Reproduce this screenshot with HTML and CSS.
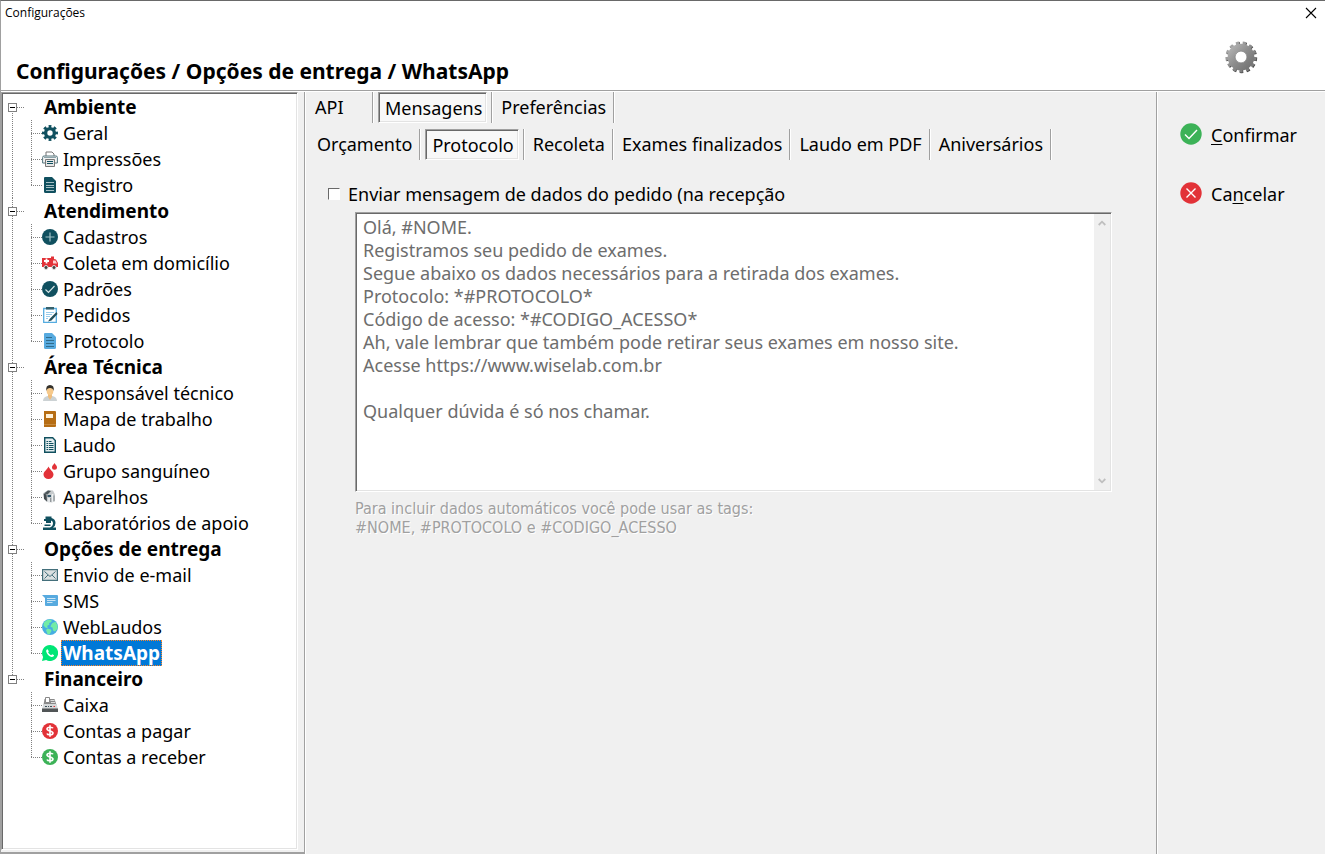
FILE: index.html
```html
<!DOCTYPE html>
<html lang="pt-BR">
<head>
    <meta charset="UTF-8">
    <title>Configurações</title>
    <link rel="stylesheet" href="styles.css">
</head>
<body>
    <div class="window">
        <header class="header">
            <div class="titlebar">
                <span>Configurações</span>
                <button class="close" aria-label="Fechar">
                    <svg width="12" height="12" viewBox="0 0 12 12"><path d="M1 1l10 10M11 1L1 11" stroke="#000" stroke-width="1.1"/></svg>
                </button>
            </div>
            <div class="heading">
                <h1>Configurações / Opções de entrega / WhatsApp</h1>
                <svg class="gear" width="34" height="34" viewBox="0 0 34 34">
                    <defs>
                        <linearGradient id="metal" x1="0" y1="0" x2="1" y2="1">
                            <stop offset="0" stop-color="#b0b0b0"/>
                            <stop offset="0.5" stop-color="#8c8c8c"/>
                            <stop offset="1" stop-color="#747474"/>
                        </linearGradient>
                    </defs>
                    <circle cx="17.6" cy="17.6" r="13.800" fill="none" stroke="#444" stroke-width="3.600" pathLength="130" stroke-dasharray="5 5"/>
                    <circle cx="17" cy="17" r="13.800" fill="none" stroke="url(#metal)" stroke-width="3.600" pathLength="130" stroke-dasharray="5 5"/>
                    <circle cx="17" cy="17" r="9.600" fill="none" stroke="url(#metal)" stroke-width="7.500"/>
                    <circle cx="17" cy="17" r="5.800" fill="#fff" stroke="#707070" stroke-width=".6"/>
                </svg>
            </div>
        </header>

        <div class="body">
            <aside class="sidebar">
                <ul class="tree sunken">
                    <li class="group">
                        <div class="group-row"><button class="toggle" aria-label="Recolher"></button><b>Ambiente</b></div>
                        <ul>
                            <li><a href="#">
                                <svg viewBox="0 0 16 16"><circle cx="8" cy="8" r="6.400" fill="none" stroke="#10505f" stroke-width="3.200" pathLength="80" stroke-dasharray="5.500 4.500" stroke-dashoffset="2.750"/><circle cx="8" cy="8" r="4.400" fill="none" stroke="#10505f" stroke-width="3.400"/></svg>
                                <span>Geral</span></a></li>
                            <li><a href="#">
                                <svg viewBox="0 0 16 16"><path d="M4 5V1h6l2 2v2" fill="#fff" stroke="#777" /><path d="M3 12H.6V6.5Q.6 5 2 5h12q1.400 0 1.400 1.500V12H13" fill="#f2f2f2" stroke="#56777f"/><path d="M2 6.500h12" stroke="#8ca4aa"/><path d="M3.500 8.500h9v7h-9z" fill="#e6e6e6" stroke="#777"/><path d="M5 10.500h6M5 12.500h6" stroke="#10505f"/></svg>
                                <span>Impressões</span></a></li>
                            <li><a href="#">
                                <svg viewBox="0 0 16 16"><path d="M3 0h7l4 4v10.500q0 1.500-1.500 1.500h-9Q2 16 2 14.500V1q0-1 1-1z" fill="#10505f"/><path d="M4 5.500h8M4 8.500h8M4 10.500h8M4 13.500h8" stroke="#b8cdd1" stroke-width=".9"/></svg>
                                <span>Registro</span></a></li>
                        </ul>
                    </li>
                    <li class="group">
                        <div class="group-row"><button class="toggle" aria-label="Recolher"></button><b>Atendimento</b></div>
                        <ul>
                            <li><a href="#">
                                <svg viewBox="0 0 16 16"><circle cx="8" cy="8" r="8" fill="#10505f"/><path d="M3.500 8h9M8 3.500v9" stroke="#9fc0c6" stroke-width="1.200"/></svg>
                                <span>Cadastros</span></a></li>
                            <li><a href="#">
                                <svg viewBox="0 0 16 16"><path d="M0 3h9V1.500h3V4l2 .5 2 3.500v4H0z" fill="#e23238"/><path d="M11 5.500h2.500L15 8.500h-4z" fill="#fbd0d0"/><path d="M2 6h5M4.500 3.500v5" stroke="#fff" stroke-width="1.800"/><circle cx="4" cy="12.500" r="2" fill="#444" stroke="#ddd"/><circle cx="12" cy="12.500" r="2" fill="#444" stroke="#ddd"/></svg>
                                <span>Coleta em domicílio</span></a></li>
                            <li><a href="#">
                                <svg viewBox="0 0 16 16"><circle cx="8" cy="8" r="8" fill="#10505f"/><path d="M3.500 8.500l3 3 6-6.500" fill="none" stroke="#d5e4e6" stroke-width="1.200"/></svg>
                                <span>Padrões</span></a></li>
                            <li><a href="#">
                                <svg viewBox="0 0 16 16"><path d="M1.700 1.500h12.600v13.800H1.700z" fill="#fff" stroke="#55ace0" stroke-width="1.300"/><path d="M4 0h8v2.500H4z" fill="#35616c"/><path d="M4 5.500h8M4 7.500h6M4 9.500h4M4 11.500h2" stroke="#8cc5e8" stroke-width=".9"/><path d="M14.500 5L8 11.500l-2 3 3.500-1L15.500 7z" fill="#244e59"/></svg>
                                <span>Pedidos</span></a></li>
                            <li><a href="#">
                                <svg viewBox="0 0 16 16"><path d="M3 0h7l4 4v10.500q0 1.500-1.500 1.500h-9Q2 16 2 14.500V1q0-1 1-1z" fill="#57aadf"/><path d="M4 4.500h6M4 7.500h8M4 10.500h8M4 13.500h8" stroke="#2b6582" stroke-width=".9"/></svg>
                                <span>Protocolo</span></a></li>
                        </ul>
                    </li>
                    <li class="group">
                        <div class="group-row"><button class="toggle" aria-label="Recolher"></button><b>Área Técnica</b></div>
                        <ul>
                            <li><a href="#">
                                <svg viewBox="0 0 16 16"><path d="M1 16q0-4 4.500-5h5q4.500 1 4.500 5z" fill="#ccd2d4"/><path d="M6 9h4v3l-2 3-2-3z" fill="#efbd7c"/><ellipse cx="8" cy="5.500" rx="3.400" ry="4.500" fill="#f6c98b"/><path d="M4.300 6Q3.500 0 8 0t3.700 6Q11 3 8 3T4.300 6z" fill="#33302b"/></svg>
                                <span>Responsável técnico</span></a></li>
                            <li><a href="#">
                                <svg viewBox="0 0 16 16"><path d="M2 0h11q1 0 1 1v14q0 1-1 1H2z" fill="#b66d14"/><path d="M4 3h7v4H4z" fill="#fff1d8"/><path d="M2 13.500h12" stroke="#ce9650" stroke-width=".7"/></svg>
                                <span>Mapa de trabalho</span></a></li>
                            <li><a href="#">
                                <svg viewBox="0 0 16 16"><path d="M2.700.8h8l2.600 2.700v11.700H2.700z" fill="#e4edef" stroke="#10505f" stroke-width="1.400"/><path d="M4.500 4.500h5M4.500 6.500h7M4.500 8.500h7M4.500 10.500h7M4.500 12.500h7" stroke="#10505f"/><path d="M6.500 4v9" stroke="#e4edef" stroke-width=".8"/></svg>
                                <span>Laudo</span></a></li>
                            <li><a href="#">
                                <svg viewBox="0 0 16 16"><path d="M6.500 3.500C5 7 1.500 8.500 1.500 11.500a5 4.500 0 0 0 10 0C11.500 8.500 8 7 6.500 3.500zM12.500 0C12 1.500 10 2.500 10 4.200a2.500 2.500 0 0 0 5 0C15 2.500 13 1.500 12.500 0z" fill="#e23238"/></svg>
                                <span>Grupo sanguíneo</span></a></li>
                            <li><a href="#">
                                <svg viewBox="0 0 16 16"><path d="M1.500 4l4.500-3 5 .5 2 4v6l-3 2-6-1z" fill="#c6cacc"/><path d="M1.500 4.500l3 1 .5 7-3-2.500z" fill="#41494d"/><path d="M2 4.500L6 1.500l3 .5-3.500 3.500z" fill="#4c565a"/><path d="M5.500 6h3.500v2H5.500z" fill="#34576a"/><path d="M7 9v5M10.500 5v8" stroke="#eef1f2" stroke-width="1.500"/><path d="M12 6.500v6M8.700 9v4" stroke="#858c8f"/></svg>
                                <span>Aparelhos</span></a></li>
                            <li><a href="#">
                                <svg viewBox="0 0 16 16"><path d="M3.500 1.500h6V3q4 1 4 5 0 3-2.500 4.500h3V15H1v-2.500h7Q11 11 11 8q0-2-2-2.500V8h-5V6H2V4h1.500z" fill="#10505f"/><path d="M2.500 9.500h6v1.500h-6z" fill="#10505f"/></svg>
                                <span>Laboratórios de apoio</span></a></li>
                        </ul>
                    </li>
                    <li class="group">
                        <div class="group-row"><button class="toggle" aria-label="Recolher"></button><b>Opções de entrega</b></div>
                        <ul>
                            <li><a href="#">
                                <svg viewBox="0 0 16 16"><path d="M.6 2.600h14.800v10.800H.6z" fill="#dbe0e1" stroke="#446f7b" stroke-width="1.200"/><path d="M2.500 4.500L8 9.500l5.500-5M2.500 11.500L6 8M13.500 11.500L10 8" fill="none" stroke="#446f7b"/></svg>
                                <span>Envio de e-mail</span></a></li>
                            <li><a href="#">
                                <svg viewBox="0 0 16 16"><path d="M0 2h15q1 0 1 1v9q0 1-1 1H4q-1 0-1-1V5z" fill="#57aadf"/><path d="M5 5.500h8.500M5 7.500h8.500M5 9.500h5.500" stroke="#cbe5f5"/></svg>
                                <span>SMS</span></a></li>
                            <li><a href="#">
                                <svg viewBox="0 0 16 16"><circle cx="8" cy="8" r="8" fill="#46aee2"/><path d="M2 3.500Q4.500.5 8.500.500L10 2 8.500 3.500 7 4l.5 1.500L5 7l1 1.500L4 9 1.500 6.500zM10.500 4l3-1.200Q16 6 15.700 9.500L13 12.500l-2-1-.5-3-2-.5.500-2zM5.500 9.500l3.500 1 .5 1.500-2 3.500-2-.5L4 11z" fill="#72eca6"/></svg>
                                <span>WebLaudos</span></a></li>
                            <li><a href="#" class="selected">
                                <svg viewBox="0 0 16 16"><path d="M8 0a8 8 0 1 1-3.800 15L0 16l1.100-4A8 8 0 0 1 8 0z" fill="#00e676"/><path d="M5.500 4.200c-.8.3-1.500 1-1.300 2.200.5 2.500 2.800 4.800 5.300 5.500 1.400.2 2.300-.4 2.600-1.600L10.200 9.200l-1 1C7.800 9.700 6.800 8.700 6.100 7.300l.8-1z" fill="#fff"/></svg>
                                <span>WhatsApp</span></a></li>
                        </ul>
                    </li>
                    <li class="group">
                        <div class="group-row"><button class="toggle" aria-label="Recolher"></button><b>Financeiro</b></div>
                        <ul>
                            <li><a href="#">
                                <svg viewBox="0 0 16 16"><path d="M2.500 2h10l2 6h-13z" fill="#898989"/><path d="M3.500 0.500h4v5h-4z" fill="#fff" stroke="#888"/><path d="M8.500 3.500h4M9 5.500h4" stroke="#ddd"/><path d="M1.500 7h13l1.500 5H0z" fill="#d5d8d9"/><path d="M3 9.500h2M6 9.500h1M8 9.500h2" stroke="#3d515a"/><path d="M11.500 9.500H13" stroke="#e23238"/><path d="M0 11.500h16V15H0z" fill="#515556"/></svg>
                                <span>Caixa</span></a></li>
                            <li><a href="#">
                                <svg viewBox="0 0 16 16"><circle cx="8" cy="8" r="8" fill="#e23238"/><path d="M11 5.300C10.500 4 5 3.500 5 6c0 2.300 6 1.500 6 4 0 2.400-5.500 2.200-6 .5M8 2.300v11.400" fill="none" stroke="#fff" stroke-width="1.600"/></svg>
                                <span>Contas a pagar</span></a></li>
                            <li><a href="#">
                                <svg viewBox="0 0 16 16"><circle cx="8" cy="8" r="8" fill="#3cb257"/><path d="M11 5.300C10.500 4 5 3.500 5 6c0 2.300 6 1.500 6 4 0 2.400-5.500 2.200-6 .5M8 2.300v11.400" fill="none" stroke="#fff" stroke-width="1.600"/></svg>
                                <span>Contas a receber</span></a></li>
                        </ul>
                    </li>
                </ul>
            </aside>

            <main class="content">
                <div class="tabs" role="tablist">
                    <div class="tab-cell tab-first"><button role="tab">API</button></div>
                    <div class="tab-cell"><button role="tab" class="active sunken" aria-selected="true">Mensagens</button></div>
                    <div class="tab-cell"><button role="tab">Preferências</button></div>
                </div>
                <div class="tabs tabs-inner" role="tablist">
                    <div class="tab-cell"><button role="tab">Orçamento</button></div>
                    <div class="tab-cell"><button role="tab" class="active sunken" aria-selected="true">Protocolo</button></div>
                    <div class="tab-cell"><button role="tab">Recoleta</button></div>
                    <div class="tab-cell"><button role="tab">Exames finalizados</button></div>
                    <div class="tab-cell"><button role="tab">Laudo em PDF</button></div>
                    <div class="tab-cell"><button role="tab">Aniversários</button></div>
                </div>

                <div class="panel">
                    <div class="check">
                        <input type="checkbox" id="send-message">
                        <label for="send-message">Enviar mensagem de dados do pedido (na recepção</label>
                    </div>
                    <div class="message sunken">
                        <textarea aria-label="Mensagem" disabled>Olá, #NOME.
Registramos seu pedido de exames.
Segue abaixo os dados necessários para a retirada dos exames.
Protocolo: *#PROTOCOLO*
Código de acesso: *#CODIGO_ACESSO*
Ah, vale lembrar que também pode retirar seus exames em nosso site.
Acesse https://www.wiselab.com.br

Qualquer dúvida é só nos chamar.</textarea>
                        <div class="scrollbar">
                            <svg width="8" height="6" viewBox="0 0 8 6"><path d="M.7 5L4 1.700 7.300 5" fill="none" stroke="#bfbfbf" stroke-width="1.800"/></svg>
                            <svg width="8" height="6" viewBox="0 0 8 6"><path d="M.7 1L4 4.300 7.300 1" fill="none" stroke="#bfbfbf" stroke-width="1.800"/></svg>
                        </div>
                    </div>
                    <p class="hint">Para incluir dados automáticos você pode usar as tags:<br>#NOME, #PROTOCOLO e #CODIGO_ACESSO</p>
                </div>
            </main>

            <div class="actions">
                <button>
                    <svg width="22" height="22" viewBox="0 0 22 22"><circle cx="11" cy="11" r="10.700" fill="#3cb257"/><path d="M5 11.500l4 4 8-8.500" fill="none" stroke="#fff" stroke-width="1.400"/></svg>
                    <span><u>C</u>onfirmar</span>
                </button>
                <button>
                    <svg width="22" height="22" viewBox="0 0 22 22"><circle cx="11" cy="11" r="10.700" fill="#e23238"/><path d="M6.500 6.500l9 9M15.500 6.500l-9 9" stroke="#fff" stroke-width="1.400"/></svg>
                    <span>Ca<u>n</u>celar</span>
                </button>
            </div>
        </div>
    </div>
</body>
</html>
```
FILE: styles.css
```css
* {
    box-sizing: border-box;
}

body {
    margin: 0;
    font-family: Tahoma, "Noto Sans", sans-serif;
    font-size: 18px;
    line-height: 22px;
    color: #000;
    background: #f0f0f0;
}

button {
    font: inherit;
    color: inherit;
    background: none;
    border: none;
    padding: 0;
}

ul {
    list-style: none;
    margin: 0;
    padding: 0;
}

.sunken {
    border: 1px solid #fff;
    border-top-color: #a0a0a0;
    border-left-color: #a0a0a0;
    box-shadow: inset 1px 1px #696969, inset -1px -1px #e3e3e3;
}

.window {
    display: flex;
    flex-direction: column;
    min-height: 100vh;
    border-top: 1px solid #696969;
    border-left: 1px solid #a0a0a0;
}

/* header */
.header {
    background: #fff;
    border-bottom: 1px solid #a0a0a0;
}

.titlebar {
    display: flex;
    justify-content: space-between;
    align-items: center;
    height: 24px;
    padding: 0 8px 0 4px;
    font-family: "Segoe UI", "Open Sans", sans-serif;
    font-size: 12px;
}

.close {
    display: flex;
}

.heading {
    display: flex;
    justify-content: space-between;
    align-items: flex-start;
    height: 65px;
    padding: 15px 67px 0 15px;
}

h1 {
    margin: 20px 0 0;
    font-size: 21px;
    line-height: 22px;
}

.body {
    flex: 1;
    display: grid;
    grid-template-columns: 304px 1fr 169px;
    border-top: 1px solid #fff;
}

/* tree */
.sidebar {
    display: flex;
    padding: 0 6px 2px 0;
    border-right: 1px solid #a0a0a0;
    border-bottom: 2px solid #a0a0a0;
}

.tree {
    flex: 1;
    padding: 1px 1px 1px 4px;
    background: #fff;
}

.group {
    background: repeating-linear-gradient(#808080 0 1px, transparent 1px 2px) 6px 0 / 1px 100% no-repeat;
}

.group:first-child {
    background-position: 6px 13px;
}

.group:last-child {
    background-size: 1px 13px;
}

.group-row {
    display: flex;
    align-items: center;
    height: 26px;
    padding-left: 2px;
    font-size: 19px;
    background: repeating-linear-gradient(90deg, #808080 0 1px, transparent 1px 2px) 11px 13px / 7px 1px no-repeat;
}

.toggle {
    width: 9px;
    height: 9px;
    margin-right: 27px;
    border: 1px solid #808080;
    background: linear-gradient(#000, #000) center / 5px 1px no-repeat #fff;
}

.group li {
    height: 26px;
    padding-left: 36px;
    background:
        repeating-linear-gradient(#808080 0 1px, transparent 1px 2px) 25px 0 / 1px 100% no-repeat,
        repeating-linear-gradient(90deg, #808080 0 1px, transparent 1px 2px) 25px 13px / 11px 1px no-repeat;
}

.group li:last-child {
    background-size: 1px 14px, 11px 1px;
}

.tree a {
    display: flex;
    align-items: center;
    height: 26px;
    color: #000;
    text-decoration: none;
    white-space: nowrap;
}

.tree a svg {
    width: 16px;
    height: 16px;
    margin-right: 3px;
}

.tree a span {
    padding: 2px;
}

.tree .selected span {
    padding: 1px;
    border: 1px dotted #ff8728;
    background: #0078d7;
    color: #fff;
    font-size: 19px;
    font-weight: bold;
}

/* tabs */
.content {
    min-width: 0;
    border-left: 1px solid #fff;
}

.tabs {
    display: flex;
    height: 31px;
}

.tab-cell {
    display: flex;
    align-items: center;
    border-right: 1px solid #a0a0a0;
    box-shadow: 1px 0 #fff;
}

.tab-cell button {
    padding: 0 7px 2px 9px;
    white-space: nowrap;
}

.tab-first {
    width: 67px;
}

.tab-cell .active {
    height: 31px;
    margin: 0 4px 0 5px;
    padding: 0 4px 0 6px;
    background: #f8f8f8;
}

.tabs-inner {
    margin-top: 6px;
    padding-left: 2px;
}

/* message panel */
.panel {
    padding: 23px 44px 0 22px;
}

.check {
    display: flex;
    align-items: center;
    gap: 8px;
}

.check input {
    appearance: none;
    width: 12px;
    height: 12px;
    margin: 0;
    background: #fff;
    border: 1px solid #fff;
    border-top-color: #696969;
    border-left-color: #696969;
}

.message {
    display: flex;
    height: 280px;
    margin: 7px 0 0 27px;
    padding: 1px;
    background: #fff;
}

.message textarea {
    flex: 1;
    padding: 2px 6px;
    border: none;
    resize: none;
    overflow: hidden;
    background: #fff;
    color: #6d6d6d;
    font: inherit;
    line-height: 23px;
}

.scrollbar {
    display: flex;
    flex-direction: column;
    justify-content: space-between;
    align-items: center;
    width: 16px;
    padding: 6px 0;
    background: #f0f0f0;
}

.hint {
    margin: 7px 0 0 27px;
    font-family: Tahoma, "DejaVu Sans Condensed", sans-serif;
    font-size: 16px;
    line-height: 19px;
    color: #a0a0a0;
    text-shadow: 1px 1px #fff;
}

/* confirm / cancel */
.actions {
    display: flex;
    flex-direction: column;
    align-items: flex-start;
    gap: 35px;
    padding: 30px 0 0 23px;
    border-left: 1px solid #a0a0a0;
    box-shadow: inset 1px 0 #fff;
}

.actions button {
    display: flex;
    align-items: center;
    gap: 9px;
}

.actions span {
    padding-top: 2px;
}

.actions u {
    text-underline-offset: 2px;
}
```
